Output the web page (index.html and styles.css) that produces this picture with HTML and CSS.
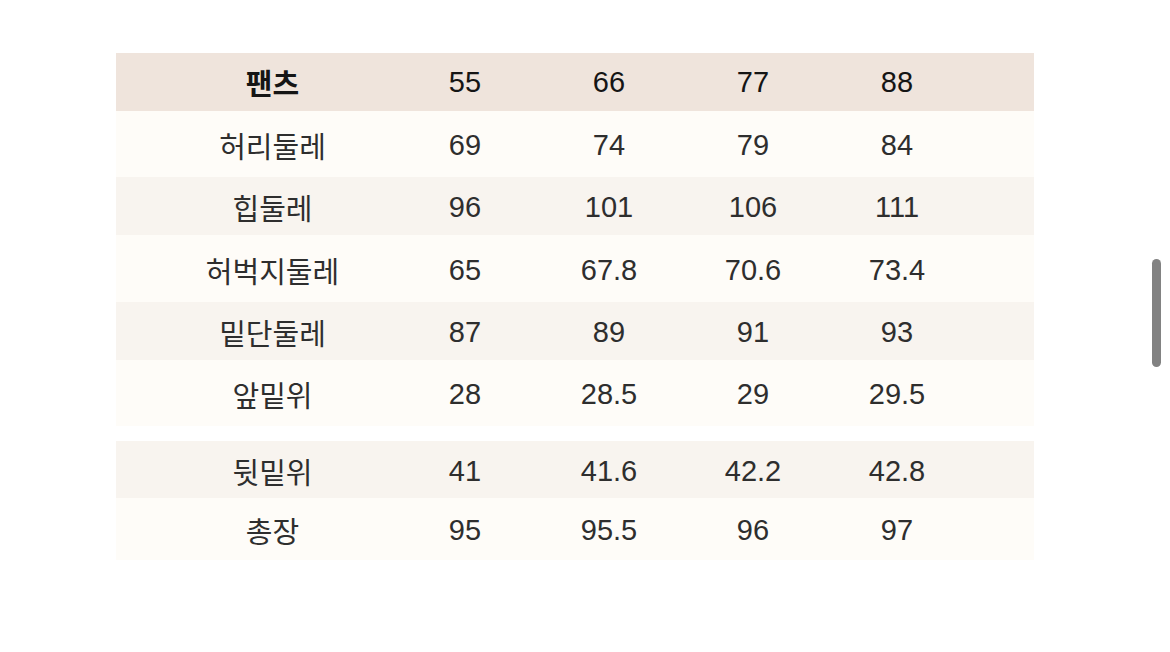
FILE: index.html
```html
<!DOCTYPE html>
<html lang="ko">
<head>
<meta charset="utf-8">
<title>사이즈표</title>
<link rel="stylesheet" href="styles.css">
</head>
<body>
<main class="page">
  <section class="size-table">
    <div class="row head h58">
      <div class="label">팬츠</div><div class="num">55</div><div class="num">66</div><div class="num">77</div><div class="num">88</div>
    </div>
    <div class="row light h66">
      <div class="label">허리둘레</div><div class="num">69</div><div class="num">74</div><div class="num">79</div><div class="num">84</div>
    </div>
    <div class="row alt h58">
      <div class="label">힙둘레</div><div class="num">96</div><div class="num">101</div><div class="num">106</div><div class="num">111</div>
    </div>
    <div class="row light h67">
      <div class="label">허벅지둘레</div><div class="num">65</div><div class="num">67.8</div><div class="num">70.6</div><div class="num">73.4</div>
    </div>
    <div class="row alt h58">
      <div class="label">밑단둘레</div><div class="num">87</div><div class="num">89</div><div class="num">91</div><div class="num">93</div>
    </div>
    <div class="row light h66">
      <div class="label">앞밑위</div><div class="num">28</div><div class="num">28.5</div><div class="num">29</div><div class="num">29.5</div>
    </div>
    <div class="spacer"></div>
    <div class="row alt h57">
      <div class="label">뒷밑위</div><div class="num">41</div><div class="num">41.6</div><div class="num">42.2</div><div class="num">42.8</div>
    </div>
    <div class="row light h62">
      <div class="label">총장</div><div class="num">95</div><div class="num">95.5</div><div class="num">96</div><div class="num">97</div>
    </div>
  </section>
  <div class="scrollbar"></div>
</main>
</body>
</html>
```
FILE: styles.css
```css
html, body {
  margin: 0;
  padding: 0;
  background: #ffffff;
}
body {
  width: 1170px;
  height: 652px;
  overflow: hidden;
  font-family: "Liberation Sans", "Noto Sans CJK KR", sans-serif;
  color: #2e2e2e;
}
.page {
  position: relative;
  width: 1170px;
  height: 652px;
  padding-top: 53px;
  padding-left: 116px;
  box-sizing: border-box;
}
.size-table {
  width: 918px;
  display: flex;
  flex-direction: column;
}
.row {
  display: grid;
  grid-template-columns: 277px 144px 144px 144px 144px 1fr;
  align-items: center;
  padding-top: 3px;
  box-sizing: border-box;
}
.h57 { height: 57px; }
.h58 { height: 58px; }
.h62 { height: 62px; }
.h66 { height: 66px; }
.h67 { height: 67px; }
.head { background: #efe4dc; color: #151515; padding-top: 0; }
.light { background: #fefcf8; }
.alt { background: #f8f4ef; }
.spacer { height: 15px; background: #ffffff; }
.label {
  padding-left: 36px;
  text-align: center;
  font-family: "Noto Sans CJK KR", sans-serif;
  font-size: 29px;
  font-weight: 400;
  line-height: 1;
}
.head .label { font-weight: 700; }
.num {
  text-align: center;
  font-size: 29px;
  line-height: 1;
}
.scrollbar {
  position: absolute;
  left: 1152px;
  top: 259px;
  width: 9px;
  height: 108px;
  border-radius: 5px;
  background: #828282;
}
```
